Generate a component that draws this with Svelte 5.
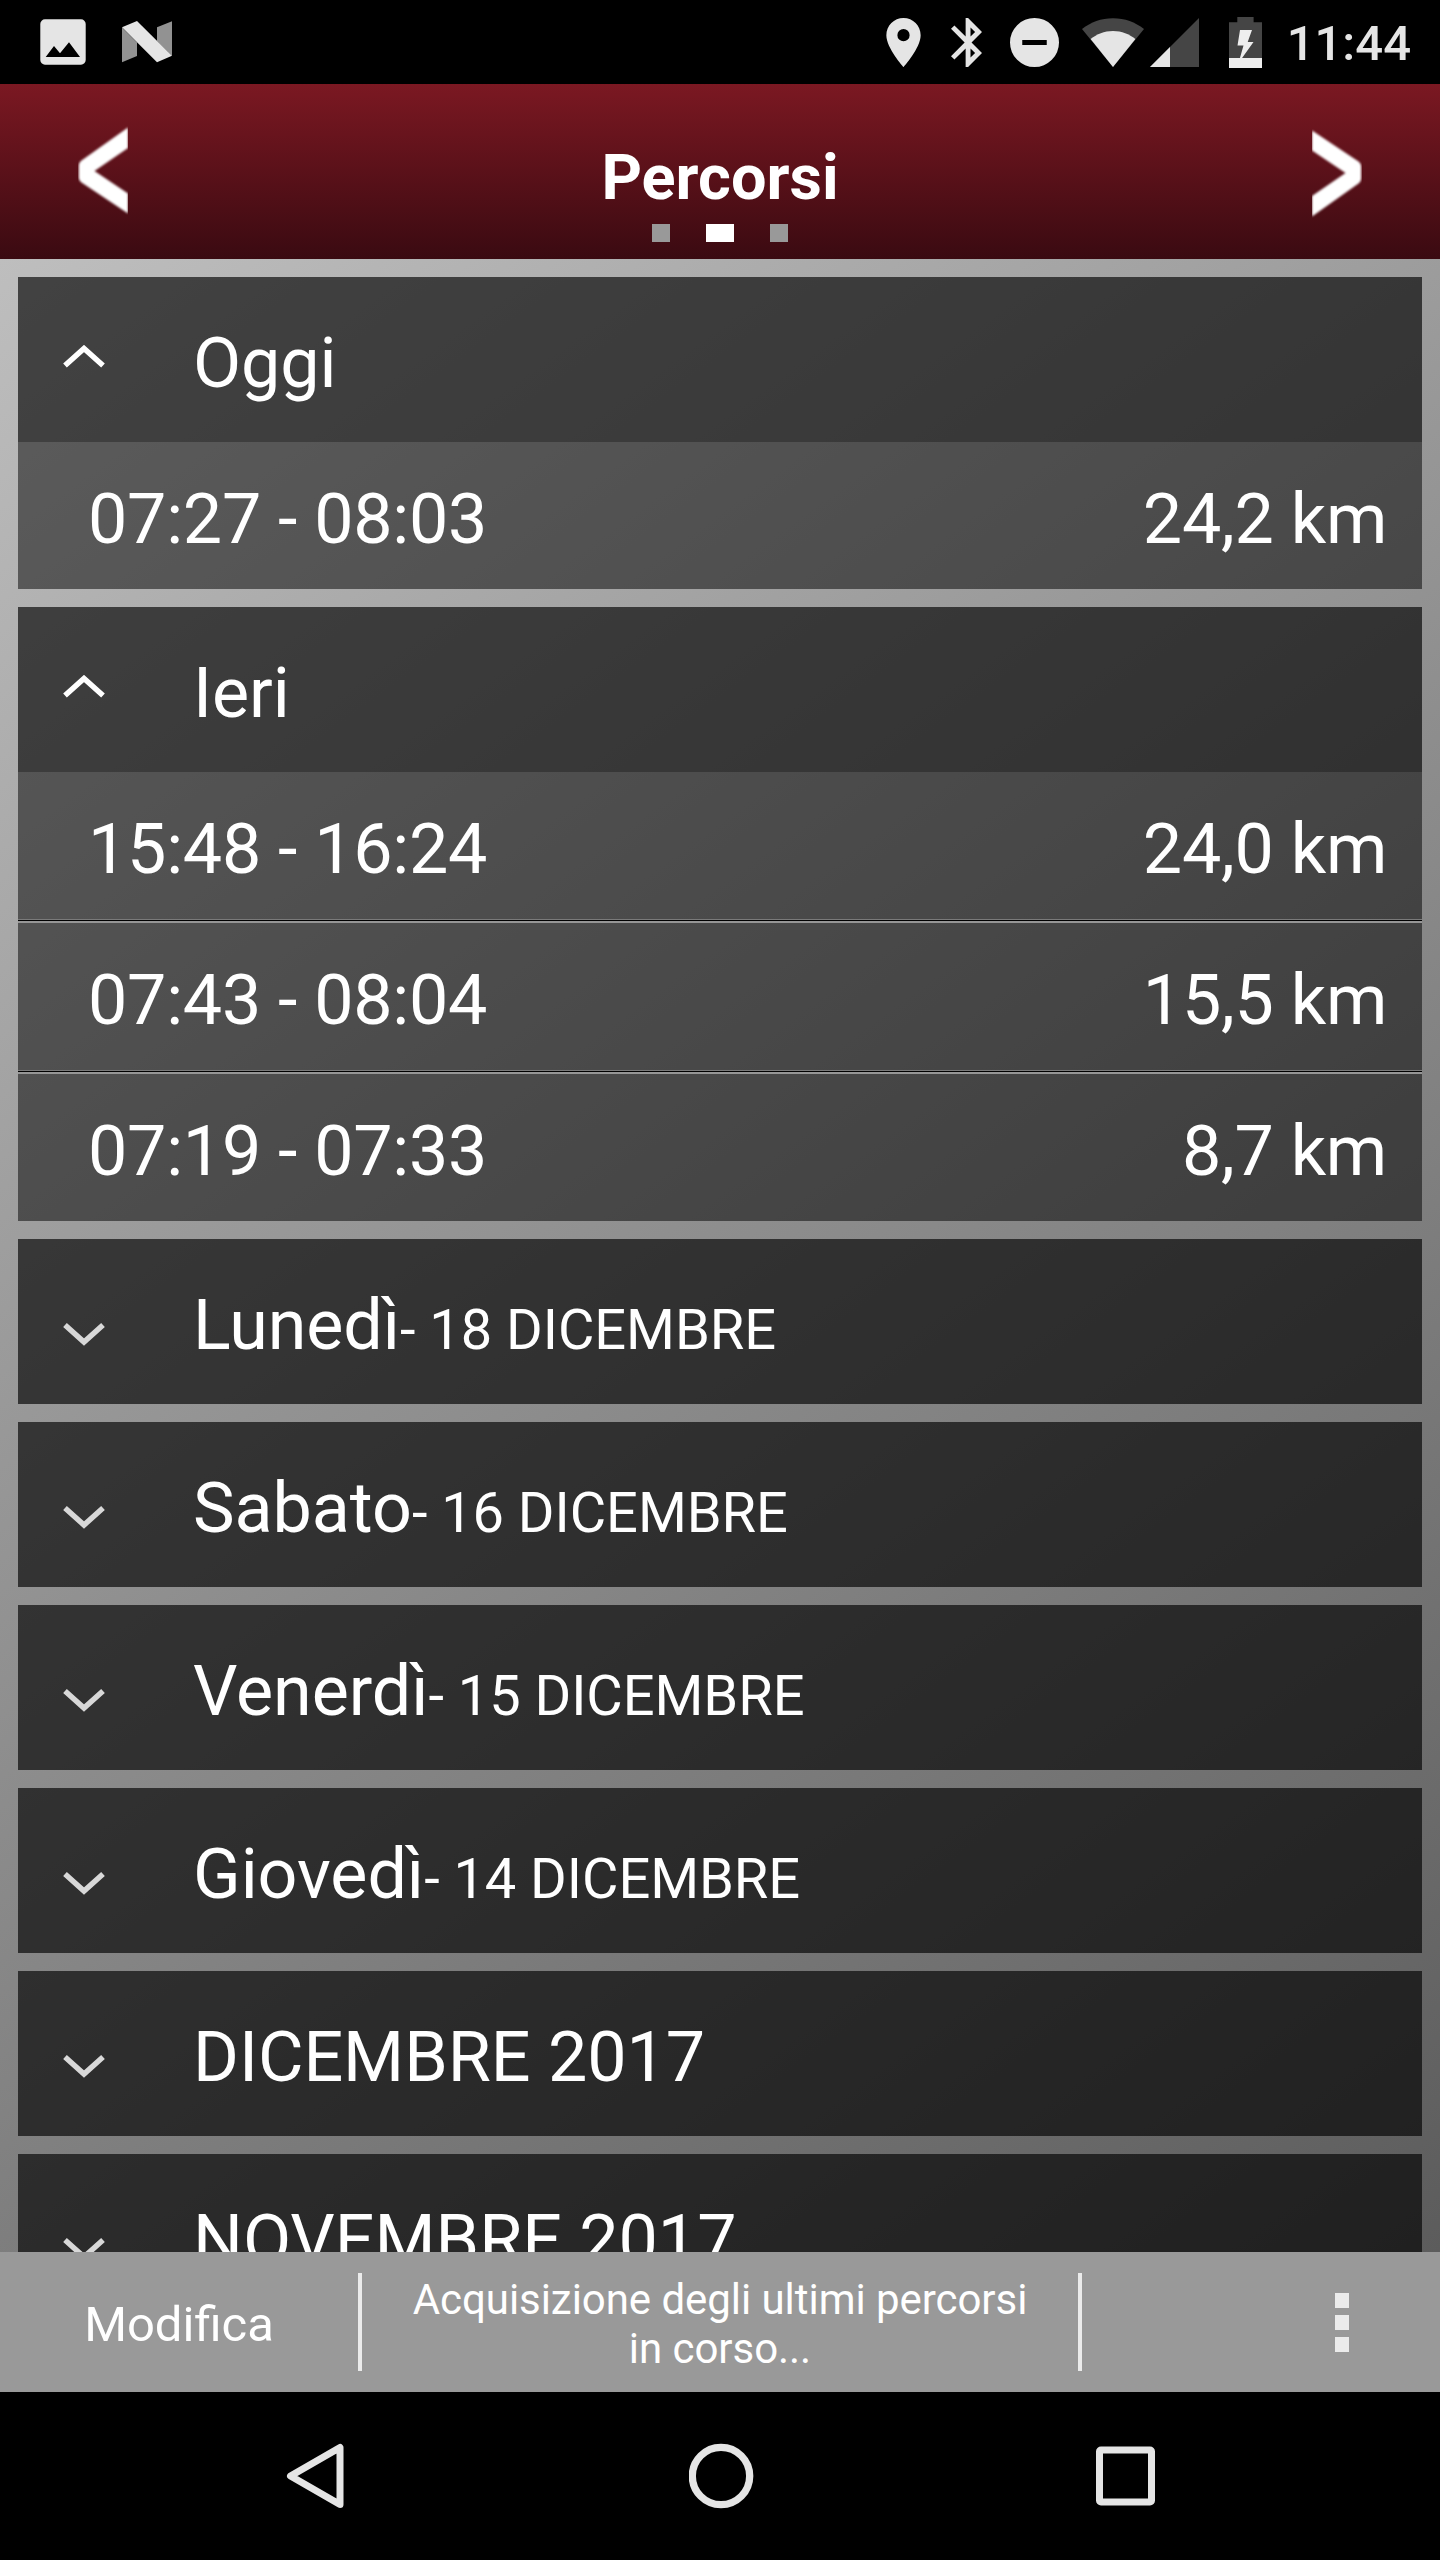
<script>
  let groups = [
    { title: "Oggi", open: true, trips: [{ time: "07:27 - 08:03", km: "24,2 km" }] },
    {
      title: "Ieri",
      open: true,
      trips: [
        { time: "15:48 - 16:24", km: "24,0 km" },
        { time: "07:43 - 08:04", km: "15,5 km" },
        { time: "07:19 - 07:33", km: "8,7 km" },
      ],
    },
    { title: "Lunedì", date: "- 18 DICEMBRE", trips: [] },
    { title: "Sabato", date: "- 16 DICEMBRE", trips: [] },
    { title: "Venerdì", date: "- 15 DICEMBRE", trips: [] },
    { title: "Giovedì", date: "- 14 DICEMBRE", trips: [] },
    { title: "DICEMBRE 2017", trips: [] },
    { title: "NOVEMBRE 2017", trips: [] },
  ];

  function toggle(group) {
    if (!group.trips.length) return;
    group.open = !group.open;
    groups = groups;
  }
</script>

<div class="screen">
  <div class="status-bar">
    <svg class="photo" width="46" height="46" viewBox="0 0 46 46">
      <path fill="#e5e5e5" fill-rule="evenodd" d="M5 0.3h36a4.7 4.7 0 0 1 4.7 4.7v36a4.7 4.7 0 0 1-4.7 4.7H5A4.7 4.7 0 0 1 .3 41V5A4.7 4.7 0 0 1 5 .3zM5.7 38H40L29 23.3l-9 11-6-7.3z" />
    </svg>
    <svg class="nougat" width="50" height="42" viewBox="0 0 50 42">
      <path fill="#929292" d="M0 6.5l15 15V35L0 41.200zM35 6.300L50 .2v34.500L35 20z" />
      <path fill="#e5e5e5" d="M0 6.300L15 0l35 34.700-15 6.500z" />
    </svg>

    <div class="status-right">
      <svg width="35" height="49" viewBox="5 2 14 20">
        <path fill="#e5e5e5" d="M12 2C8.130 2 5 5.130 5 9c0 5.250 7 13 7 13s7-7.750 7-13c0-3.870-3.130-7-7-7zm0 9.500a2.500 2.500 0 0 1 0-5 2.500 2.500 0 0 1 0 5z" />
      </svg>
      <svg class="bluetooth" width="31" height="49" viewBox="5 2 12.710 20">
        <path fill="#e5e5e5" d="M17.710 7.710L12 2h-1v7.590L6.410 5 5 6.410 10.590 12 5 17.590 6.410 19 11 14.410V22h1l5.710-5.710-4.300-4.290 4.300-4.290zM13 5.830l1.880 1.880L13 9.590V5.830zm1.880 10.460L13 18.170v-3.760l1.880 1.880z" />
      </svg>
      <svg class="dnd" width="49" height="49" viewBox="2 2 20 20">
        <path fill="#e5e5e5" d="M12 2a10 10 0 1 0 0 20 10 10 0 0 0 0-20zm5 11H7v-2h10v2z" />
      </svg>
      <svg class="wifi" width="62" height="49" viewBox="0 0 62 49">
        <path fill="#454545" d="M31 49L0 11C9 4 19 .2 31 .2S53 4 62 11z" />
        <path fill="#e5e5e5" d="M31 49L8.600 21C15 16 22 13 31 13s16 3 22.400 8z" />
      </svg>
      <svg class="signal" width="49" height="49" viewBox="0 0 49 49">
        <path fill="#454545" d="M0 49L49 0v49z" />
        <path fill="#e5e5e5" d="M0 49l20-20v20z" />
      </svg>
      <svg class="battery" width="33" height="51" viewBox="0 0 33 51">
        <path fill="#454545" d="M8.300 0h16.300v5.200H33V51H0V5.200h8.300z" />
        <path fill="#eee" d="M0 41h33v10H0zM11 13h12l-4.300 12h5.800L9.500 46l5-17.500H8.500z" />
      </svg>
      <span class="clock">11:44</span>
    </div>
  </div>

  <header class="title-bar">
    <button class="arrow" aria-label="Indietro">
      <svg width="50" height="92" viewBox="0 0 50 92">
        <path fill="#fff" d="M50 1.500V22L16.500 45 50 67.500v20L3.500 56.500C1.500 55 .8 53 .8 51V40c0-2 .7-4 2.700-5.500z" />
      </svg>
    </button>
    <div class="title">
      <h1>Percorsi</h1>
      <div class="pages">
        <i></i><i class="active"></i><i></i>
      </div>
    </div>
    <button class="arrow next" aria-label="Avanti">
      <svg width="50" height="92" viewBox="0 0 50 92">
        <path fill="#fff" d="M50 1.500V22L16.500 45 50 67.500v20L3.500 56.500C1.500 55 .8 53 .8 51V40c0-2 .7-4 2.700-5.500z" />
      </svg>
    </button>
  </header>

  <main class="list">
    {#each groups as group}
      <section class="card">
        <button class="card-head" on:click={() => toggle(group)}>
          <svg class="chevron" class:open={group.open} width="42" height="24" viewBox="0 0 42 24">
            {#if group.open}
              <path d="M2 20.500L21 3.500l19 17" />
            {:else}
              <path d="M2 3L21 20 40 3" />
            {/if}
          </svg>
          <span class="name">{group.title}{#if group.date}<small>{group.date}</small>{/if}</span>
        </button>
        {#if group.open}
          {#each group.trips as trip, i}
            {#if i > 0}<div class="separator"></div>{/if}
            <div class="trip">
              <span>{trip.time}</span>
              <span>{trip.km}</span>
            </div>
          {/each}
        {/if}
      </section>
    {/each}
  </main>

  <footer class="toolbar">
    <button class="edit">Modifica</button>
    <div class="message">Acquisizione degli ultimi percorsi in corso...</div>
    <button class="more" aria-label="Altro">
      <i></i><i></i><i></i>
    </button>
  </footer>

  <nav class="nav-bar">
    <svg width="65" height="66" viewBox="0 0 65 66">
      <path fill="none" stroke="#e5e5e5" stroke-width="7" stroke-linejoin="round" d="M57 4.500v57L7.500 33z" />
    </svg>
    <svg width="66" height="66" viewBox="0 0 66 66">
      <circle cx="32" cy="33" r="28.700" fill="none" stroke="#e5e5e5" stroke-width="7.300" />
    </svg>
    <svg width="60" height="60" viewBox="0 0 60 60">
      <rect x="4.500" y="4" width="52" height="52" rx="1.500" fill="none" stroke="#e5e5e5" stroke-width="7" />
    </svg>
  </nav>
</div>

<style>
  :global(body) {
    margin: 0;
    background: #000;
  }

  .screen {
    display: flex;
    flex-direction: column;
    width: 1440px;
    height: 2560px;
    overflow: hidden;
    font-family: Roboto, sans-serif;
    color: #fff;
  }

  button {
    padding: 0;
    border: none;
    background: none;
    color: inherit;
    font: inherit;
    cursor: pointer;
  }

  svg {
    display: block;
    flex: none;
  }

  .status-bar {
    display: flex;
    align-items: center;
    flex: none;
    box-sizing: border-box;
    height: 84px;
    padding: 0 29px 0 40px;
    background: #000;
  }

  .nougat {
    margin-left: 36px;
  }

  .status-right {
    display: flex;
    align-items: center;
    margin-left: auto;
  }

  .bluetooth {
    margin-left: 30px;
  }

  .dnd {
    margin-left: 28px;
  }

  .wifi {
    margin-left: 23px;
  }

  .signal {
    margin-left: 6px;
  }

  .battery {
    margin-left: 30px;
  }

  .clock {
    margin-left: 25px;
    padding-top: 4px;
    font-size: 49px;
    font-weight: 500;
    line-height: 80px;
    color: #e5e5e5;
  }

  .title-bar {
    display: flex;
    justify-content: space-between;
    flex: none;
    box-sizing: border-box;
    height: 175px;
    padding: 0 78px;
    background: linear-gradient(#7b1822, #3a0a11);
  }

  .arrow {
    align-self: flex-start;
    margin-top: 42px;
    overflow: hidden;
  }

  .arrow svg {
    filter: blur(0.8px);
  }

  .next svg {
    transform: rotate(180deg);
  }

  .title {
    display: flex;
    flex-direction: column;
    align-items: center;
    padding-top: 56px;
  }

  h1 {
    margin: 0;
    font-size: 63px;
    font-weight: 700;
    line-height: 75px;
  }

  .pages {
    display: flex;
    gap: 36px;
    margin-top: 9px;
  }

  .pages i {
    width: 18px;
    height: 18px;
    background: #999;
  }

  .pages .active {
    width: 28px;
    background: #fff;
  }

  .list {
    display: flex;
    flex-direction: column;
    gap: 18px;
    flex: 1;
    min-height: 0;
    overflow: hidden;
    padding: 18px 18px 0;
    background: linear-gradient(144.150deg, #bebebe, #5c5c5c);
  }

  .card {
    flex: none;
  }

  .card-head {
    display: flex;
    width: 100%;
    height: 165px;
    padding-left: 45px;
    background: rgba(0, 0, 0, 0.65);
    text-align: left;
  }

  .chevron {
    margin-top: 83px;
    fill: none;
    stroke: #d8d8d8;
    stroke-width: 5.5;
  }

  .chevron.open {
    margin-top: 68px;
    stroke: #fff;
  }

  .name {
    margin-left: 88px;
    padding-top: 7px;
    font-size: 70px;
    line-height: 158px;
    letter-spacing: -0.05px;
    white-space: nowrap;
  }

  .name small {
    font-size: 56px;
    line-height: 1;
  }

  .trip {
    display: flex;
    justify-content: space-between;
    box-sizing: border-box;
    height: 147px;
    padding: 7px 35px 0 70px;
    background: rgba(0, 0, 0, 0.51);
    font-size: 70px;
    line-height: 140px;
    letter-spacing: -0.27px;
  }

  .separator {
    height: 2px;
    border-top: 1px solid #000;
    background: #969696;
    box-shadow: 0 -1px #7a7a7a;
    margin-top: 1px;
  }

  .toolbar {
    display: grid;
    grid-template-columns: 360px 720px 360px;
    align-items: center;
    flex: none;
    height: 140px;
    background: #999;
  }

  .edit {
    height: 98px;
    padding: 4px 2px 0 0;
    font-size: 49px;
  }

  .message {
    box-sizing: border-box;
    height: 98px;
    margin: 0 -2px;
    padding: 2px 40px 0;
    border: solid #ebebeb;
    border-width: 0 4px;
    font-size: 42px;
    line-height: 49px;
    letter-spacing: -0.05px;
    text-align: center;
  }

  .more {
    display: flex;
    flex-direction: column;
    gap: 7px;
    width: 14px;
    margin-left: 255px;
  }

  .more i {
    width: 14px;
    height: 15px;
    background: #ebebeb;
  }

  .nav-bar {
    display: flex;
    justify-content: space-between;
    align-items: center;
    flex: none;
    box-sizing: border-box;
    height: 168px;
    padding: 0 285px 0 283px;
    background: #000;
  }
</style>
